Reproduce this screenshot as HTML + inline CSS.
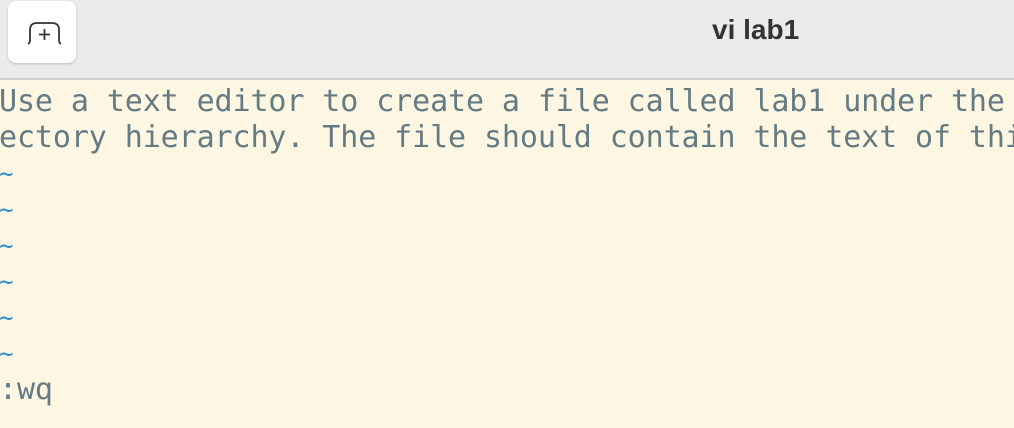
<!DOCTYPE html>
<html><head><style>
html,body{margin:0;padding:0;width:1014px;height:428px;overflow:hidden;background:#fdf6e3;}
.hdr{position:absolute;left:0;top:0;width:1014px;height:78px;background:#ebebeb;border-bottom:2px solid #d0d0d0;}
.btn{position:absolute;left:8px;top:1px;width:68px;height:62px;background:#fff;border-radius:8px;box-shadow:0 1px 2px #bbb;}
.title{position:absolute;left:712px;top:14px;font:bold 28px "Liberation Sans",sans-serif;color:#333;letter-spacing:0;}
.term{position:absolute;left:-1px;top:84px;width:1100px;font:30px "DejaVu Sans Mono",monospace;color:#657b83;letter-spacing:-0.1px;}
.l{height:36px;line-height:36px;white-space:pre;}
.t{color:#268bd2;font-size:24px;}
</style></head><body>
<div class="hdr">
<div class="btn"><svg width="68" height="62" viewBox="0 0 68 62"><path d="M20 43 Q22 42 22 39 V29 Q22 22 29 22 H44 Q51 22 51 29 V39 Q51 42 53 43" fill="none" stroke="#333" stroke-width="1.8"/><path d="M36.5 28 V39 M31 33.5 H42" stroke="#333" stroke-width="1.8"/></svg></div>
<div class="title">vi lab1</div>
</div>
<div class="term"><div class="l">Use a text editor to create a file called lab1 under the</div><div class="l">ectory hierarchy. The file should contain the text of thi</div><div class="l t">~</div><div class="l t">~</div><div class="l t">~</div><div class="l t">~</div><div class="l t">~</div><div class="l t">~</div><div class="l">:wq</div></div>
</body></html>
